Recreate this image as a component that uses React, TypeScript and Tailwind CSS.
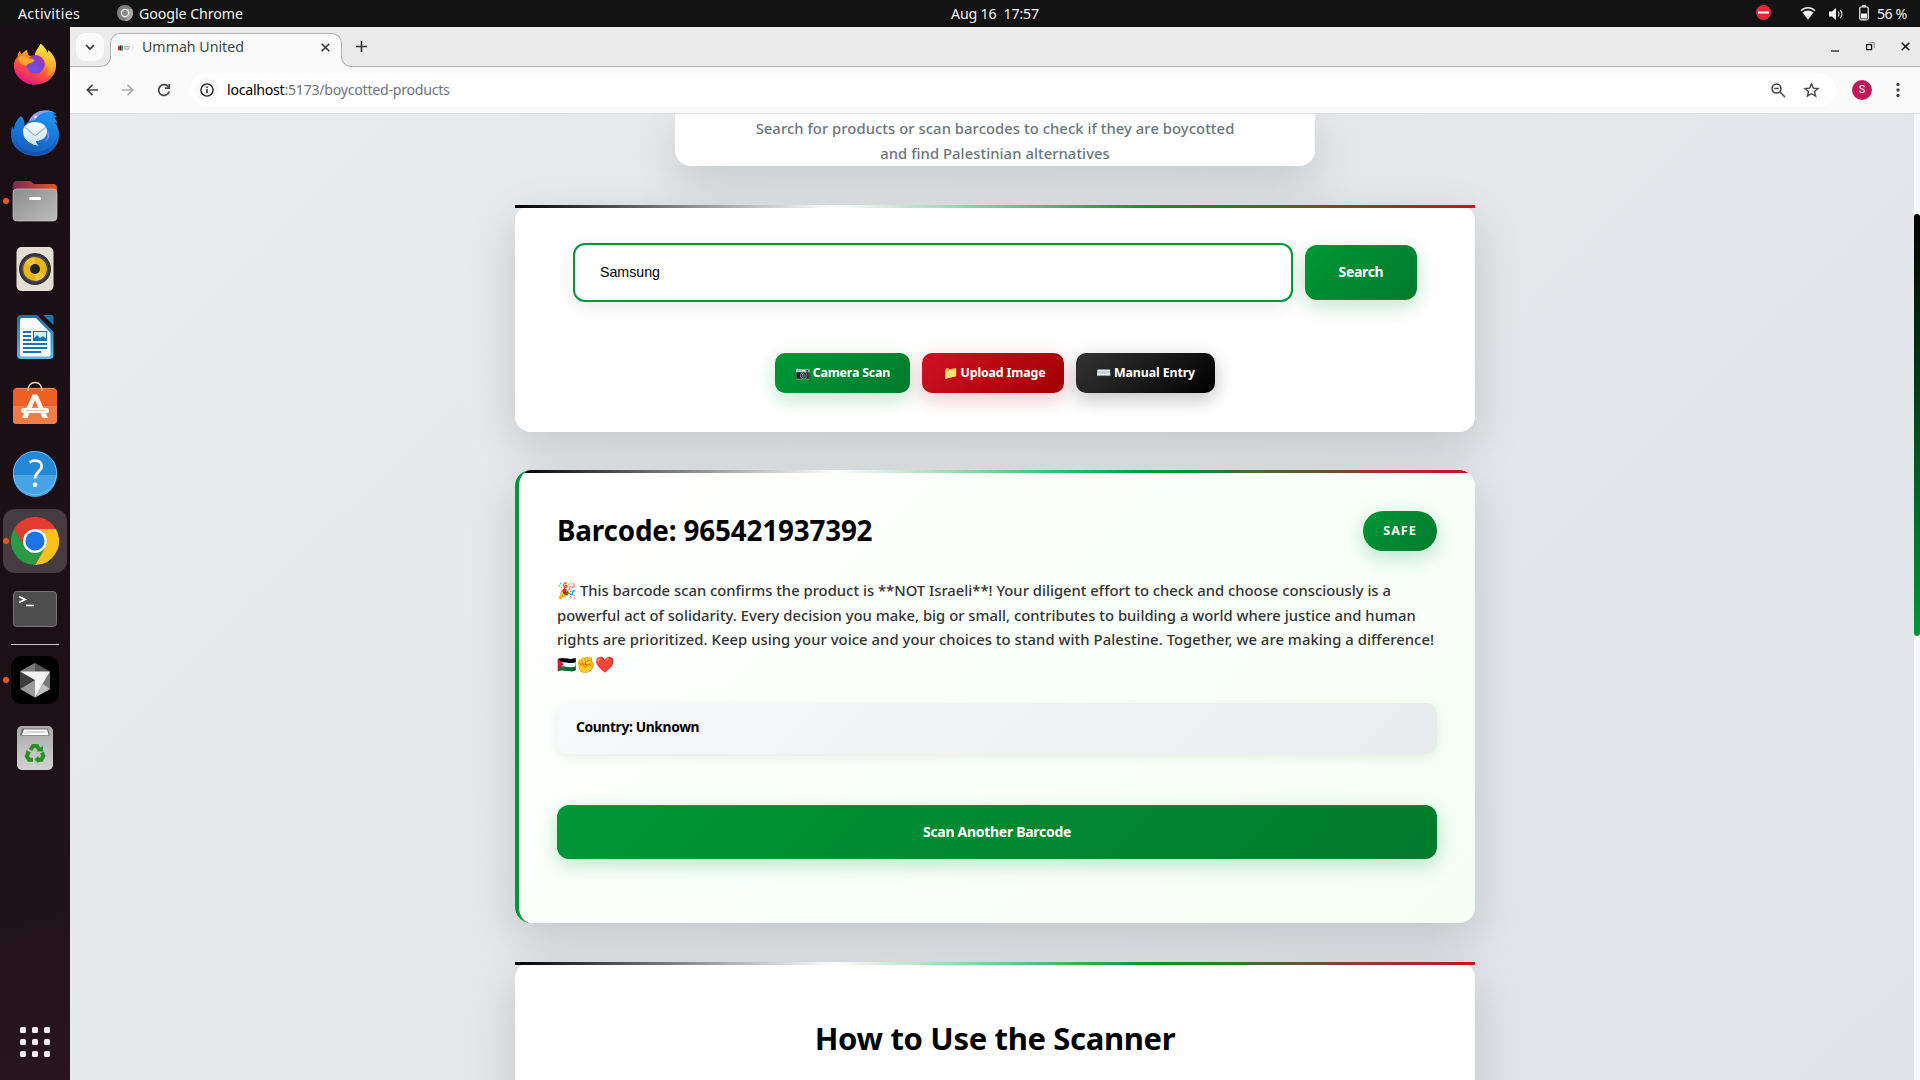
import type { ReactNode } from "react";

function FirefoxIcon() {
  return (
    <svg width="44" height="44" viewBox="0 0 48 48" className="-mt-[2px]">
      <defs>
        <linearGradient id="ff-body" x1="0.8" y1="0.05" x2="0.3" y2="1">
          <stop offset="0" stopColor="#ffe84a" />
          <stop offset="0.35" stopColor="#ffa01f" />
          <stop offset="0.65" stopColor="#ff5040" />
          <stop offset="1" stopColor="#e1108a" />
        </linearGradient>
        <linearGradient id="ff-tail" x1="0.6" y1="0" x2="0.4" y2="1">
          <stop offset="0" stopColor="#fff04a" />
          <stop offset="0.6" stopColor="#ffb02a" />
          <stop offset="1" stopColor="#ff7a2a" />
        </linearGradient>
        <radialGradient id="ff-globe" cx="0.45" cy="0.75" r="0.8">
          <stop offset="0" stopColor="#6a55e0" />
          <stop offset="0.6" stopColor="#8140cc" />
          <stop offset="1" stopColor="#c02ab0" />
        </radialGradient>
      </defs>
      <path d="M5 16c0-3 1-5 3-6.500 0 2 .5 3 1.500 4C11 11 13 10 15.500 8.500c0 3 .5 4.500 2 6.500l12 0L30 2c4 3 6.500 6.500 7.500 10 1-1 1.200-2 1-3 4.500 4 8.500 10 8.500 16 0 12.500-10.500 21.500-23 21.500S1 37 1 25.500c0-4 1.500-7 4-9.500z" fill="url(#ff-body)" />
      <path d="M30 2c4 3 6.500 6.500 7.500 10 1-1 1.200-2 1-3 4.500 4 8 9 8 15.500 0 7-4.500 11-9.500 13.500 2-4 2-9 0-13-2.500-5-9-8.500-13-9C23 11 27 8 30 2z" fill="url(#ff-tail)" />
      <circle cx="24.500" cy="24.500" r="10.200" fill="url(#ff-globe)" />
      <path d="M6 17c3-2 6-2 9 0 3 1.500 6 .5 8.500 2.500 0 2.500-3.500 2.500-6 4-1.500 1-2 2-4 2C9 25 6 22 6 17z" fill="#ffa628" />
    </svg>
  );
}

function ThunderbirdIcon() {
  return (
    <svg width="48" height="48" viewBox="0 0 48 48">
      <defs>
        <linearGradient id="tb-body" x1="0.7" y1="0" x2="0.3" y2="1">
          <stop offset="0" stopColor="#1c95f2" />
          <stop offset="1" stopColor="#1459b8" />
        </linearGradient>
        <linearGradient id="tb-mail" x1="0" y1="0" x2="0" y2="1">
          <stop offset="0" stopColor="#ffffff" />
          <stop offset="1" stopColor="#c3e0fb" />
        </linearGradient>
      </defs>
      <path d="M10 7c3 3 4 6 3.500 10L18 12C21 5 27 1.500 34 1.500c4 0 8 .5 11 3l-3 .5 4 3-3 .5c2 2 3 4 3 6l-2-1c2.500 3.500 4 7 4 12C48 38 38 47 25 47 11 47 0 38 0 26c0-3 .3-6 1-9l2 4C3 15 6 10 10 7z" fill="url(#tb-body)" />
      <path d="M4 31c4 8 12 12 20 12 11 0 20-6 22-16 0 11-9 19-21 19C14 46 6 40 4 31z" fill="#0d4fa5" opacity="0.6" />
      <path d="M18 12C21 5 27 1.500 34 1.500c3 0 6 0 9 1.500-7-1-12 1-16 4l-3 4z" fill="#a99cf5" opacity="0.85" />
      <path d="M33 33c4-3 5-9 1-15 6 5 6 13-1 15z" fill="#9d8df0" opacity="0.7" />
      <circle cx="24.500" cy="7.800" r="1.300" fill="#fff" />
      <path d="M24 13c7 0 12 4 12 9.500 0 6-5 9.500-11 9.500 0 2 1 3 3 4.500-6 0-16-4.500-16-14C12 17 17 13 24 13z" fill="url(#tb-mail)" />
      <path d="M14 18l8.500 7.500c1 1 2.500 1 3.500 0L35 18" fill="none" stroke="#8fbdea" strokeWidth="1.200" />
    </svg>
  );
}

function FilesIcon() {
  return (
    <svg width="48" height="48" viewBox="0 0 48 48">
      <defs>
        <linearGradient id="fl-back" x1="0" y1="0" x2="1" y2="0">
          <stop offset="0" stopColor="#7d2a52" />
          <stop offset="1" stopColor="#e9541f" />
        </linearGradient>
        <linearGradient id="fl-front" x1="0" y1="0" x2="1" y2="1">
          <stop offset="0" stopColor="#8d8d8d" />
          <stop offset="1" stopColor="#bcbcbc" />
        </linearGradient>
      </defs>
      <path d="M2 20V8a4 4 0 0 1 4-4h13c2 0 2.500 3 4.500 3H42a4 4 0 0 1 4 4v9z" fill="url(#fl-back)" />
      <rect x="2" y="12" width="44" height="32" rx="4" fill="url(#fl-front)" stroke="#c8c8c8" strokeWidth="0.700" />
      <rect x="18" y="20" width="12" height="3" rx="1.500" fill="#fff" />
    </svg>
  );
}

function SpeakerIcon() {
  return (
    <svg width="48" height="48" viewBox="0 0 48 48">
      <rect x="5.500" y="2" width="37" height="44" rx="5" fill="#e3dfd3" />
      <circle cx="24" cy="24" r="16" fill="#33333a" />
      <circle cx="24" cy="24" r="13.500" fill="#4b4b55" />
      <circle cx="24" cy="24" r="11.800" fill="#e8b418" />
      <path d="M24 24L14 17.500A12 12 0 0 1 24 12.200zM24 24l10 6.500A12 12 0 0 1 24 35.800z" fill="#f7cd45" opacity="0.700" />
      <circle cx="24" cy="24" r="5" fill="#232327" />
    </svg>
  );
}

function WriterIcon() {
  return (
    <svg width="48" height="48" viewBox="0 0 48 48">
      <defs>
        <linearGradient id="wr" x1="0" y1="0" x2="0" y2="1">
          <stop offset="0" stopColor="#0d74ad" />
          <stop offset="1" stopColor="#5bbce6" />
        </linearGradient>
      </defs>
      <path d="M10 2h16l16.500 17v23a4 4 0 0 1-4 4H10a4 4 0 0 1-4-4V6a4 4 0 0 1 4-4z" fill="url(#wr)" />
      <path d="M11 5h14l14.500 15v21.500a2 2 0 0 1-2 2H11a2 2 0 0 1-2-2V7a2 2 0 0 1 2-2z" fill="#fafafa" />
      <path d="M32 2h8.500a2 2 0 0 1 2 2v8z" fill="#1579b0" />
      <g fill="#1276ae">
        <rect x="12" y="18" width="8" height="2" />
        <rect x="12" y="22" width="8" height="2" />
        <rect x="12" y="26" width="8" height="2" />
        <rect x="12" y="30" width="24" height="2" />
        <rect x="12" y="34" width="24" height="2" />
        <rect x="12" y="38" width="18" height="2" />
      </g>
      <rect x="22.500" y="18.500" width="13" height="9" fill="#d9effa" stroke="#1276ae" />
      <path d="M23 27v-2l3-3 3 3 3-2 3 2.500V27z" fill="#1276ae" />
    </svg>
  );
}

function SoftwareIcon() {
  return (
    <svg width="48" height="48" viewBox="0 0 48 48" className="-mt-[2px]">
      <rect x="2" y="8" width="44" height="36" rx="4" fill="#ee5f24" />
      <path d="M2 26h44v14a4 4 0 0 1-4 4H6a4 4 0 0 1-4-4z" fill="#f07c49" />
      <path d="M5 8.400h38" stroke="#f59a70" strokeWidth="0.800" />
      <path d="M17 11c0-5.500 3-8.500 7-8.500s7 3 7 8.500" fill="none" stroke="#f7dcae" strokeWidth="1.600" />
      <path d="M21.500 14.500h5L37 38h-5.500L24 20.500 16.500 38H11z" fill="#fff5ee" />
      <rect x="10" y="28" width="28" height="5" rx="2.500" fill="#fff" />
      <path d="M14 30.500h20" stroke="#f4b396" strokeWidth="0.800" />
    </svg>
  );
}

function HelpIcon() {
  return (
    <svg width="48" height="48" viewBox="0 0 48 48">
      <circle cx="24" cy="24" r="22" fill="#2389d7" />
      <path d="M2 26h44a22 22 0 0 1-44 0z" fill="#46a4e4" />
      <circle cx="24" cy="24" r="21.600" fill="none" stroke="#7cc4f2" strokeWidth="0.800" />
      <path d="M18.500 13.300c1.800-1.200 3.500-1.700 5.500-1.700 4 0 6.800 2.200 6.800 5.700 0 5-6.800 5.700-6.800 12.200" fill="none" stroke="#fff" strokeWidth="2.800" />
      <circle cx="24" cy="35.700" r="2.300" fill="#fff" />
    </svg>
  );
}

function ChromeIcon() {
  return (
    <svg width="48" height="48" viewBox="0 0 48 48">
      <path d="M3.200 12A24 24 0 0 1 44.800 12H24a12 12 0 0 0-10.400 18z" fill="#e33b2e" />
      <path d="M44.800 12A24 24 0 0 1 24 48L34.400 30A12 12 0 0 0 24 12z" fill="#fbc116" />
      <path d="M24 48A24 24 0 0 1 3.200 12l10.400 18a12 12 0 0 0 20.800 0z" fill="#2a9a47" />
      <circle cx="24" cy="24" r="12" fill="#fff" />
      <circle cx="24" cy="24" r="9.600" fill="#1b73e8" />
    </svg>
  );
}

function TerminalIcon() {
  return (
    <svg width="48" height="48" viewBox="0 0 48 48">
      <rect x="2.500" y="6.500" width="43" height="35" rx="3.500" fill="#4d4d4d" stroke="#747474" />
      <path d="M8 11.500l6 3-6 3" fill="none" stroke="#fff" strokeWidth="1.800" />
      <path d="M15 20.500h8" stroke="#fff" strokeWidth="1.600" />
    </svg>
  );
}

function CursorIcon() {
  return (
    <svg width="48" height="48" viewBox="0 0 48 48">
      <rect width="48" height="48" rx="11" fill="#000" />
      <path d="M24 7l15 8.500L24 24 9 15.500z" fill="#585858" />
      <path d="M24 7v10L9 15.500z" fill="#7a7a7a" />
      <path d="M9 15.500V33l15-9z" fill="#3f3f3f" />
      <path d="M9 33l15 8.500V24z" fill="#9a9a9a" />
      <path d="M39 15.500V33l-15 8.500z" fill="#777" />
      <path d="M24 41.500L39 33l-7-5z" fill="#c0c0c0" />
      <path d="M9 15.500h30l-15 26V24z" fill="#f4f4f4" />
    </svg>
  );
}

function TrashIcon() {
  return (
    <svg width="48" height="48" viewBox="0 0 48 48">
      <defs>
        <linearGradient id="tr" x1="0" y1="0" x2="0" y2="1">
          <stop offset="0" stopColor="#a9a9a9" />
          <stop offset="1" stopColor="#d2d2d2" />
        </linearGradient>
      </defs>
      <rect x="6" y="2" width="36" height="44" rx="5" fill="url(#tr)" />
      <path d="M11 4.500h26l2 7H9z" fill="#6c6c6c" />
      <path d="M13 5.500h23l1.500 5.500H11z" fill="#fff" />
      <path d="M14 7.500l21 1M13 9.500l20-2" stroke="#bbb" strokeWidth="0.700" />
      <g fill="none" stroke="#2a8f22" strokeWidth="4">
        <path d="M19.500 26l2.500-4h4l2.500 3.800" />
        <path d="M31 28.500l1.300 3.500-2 3.800h-4" />
        <path d="M22 35.800h-4l-2.200-3.600 1.600-3.400" />
      </g>
      <g fill="#2a8f22">
        <path d="M25.500 27.500l6.500 0 0-6z" />
        <path d="M27.500 31.500v8l-4-4z" />
        <path d="M14.500 30.500l1-4.500 5 3z" />
      </g>
    </svg>
  );
}

function DockItem({ children, running, active }: { children: ReactNode; running?: boolean; active?: boolean }) {
  return (
    <div className="relative flex h-16 w-full shrink-0 items-center justify-center">
      <div className={active ? "flex size-16 items-center justify-center rounded-[12px] bg-[#463b41]" : "flex size-16 items-center justify-center"}>
        {children}
      </div>
      {running && <span className="absolute left-[3px] size-[6px] rounded-full bg-[#e95420]" />}
    </div>
  );
}

function Dock() {
  return (
    <aside className="flex w-[70px] shrink-0 flex-col items-center gap-1 bg-[linear-gradient(165deg,#190e14_0%,#1c1017_55%,#1f1219_80%,#27141f_100%)] pt-[6px]">
      <DockItem><FirefoxIcon /></DockItem>
      <DockItem><ThunderbirdIcon /></DockItem>
      <DockItem running><FilesIcon /></DockItem>
      <DockItem><SpeakerIcon /></DockItem>
      <DockItem><WriterIcon /></DockItem>
      <DockItem><SoftwareIcon /></DockItem>
      <DockItem><HelpIcon /></DockItem>
      <DockItem running active><ChromeIcon /></DockItem>
      <DockItem><TerminalIcon /></DockItem>
      <div className="-my-[1px] h-px w-12 shrink-0 bg-[#c9c5c7]" />
      <DockItem running><CursorIcon /></DockItem>
      <DockItem><TrashIcon /></DockItem>
      <div className="mt-auto mb-[23px] grid grid-cols-3 gap-[6px]">
        {Array.from({ length: 9 }, (_, i) => (
          <span key={i} className="size-[6px] rounded-[1.500px] bg-[#f0efee]" />
        ))}
      </div>
    </aside>
  );
}

function TopBar() {
  return (
    <header className="grid h-[27px] shrink-0 grid-cols-[1fr_auto_1fr] items-center bg-[#131313] text-[14.2px] leading-[27px] text-[#f2f2f2]">
      <div className="flex items-center pl-[18px]">
        <span className="w-[99px] tracking-[0.3px]">Activities</span>
        <svg width="16" height="16" viewBox="0 0 16 16" className="mr-[6px] -mt-px">
          <circle cx="8" cy="8" r="8" fill="#808080" />
          <path d="M8 4h7A8 8 0 0 1 8 16l3.500-6z" fill="#a5a5a5" />
          <circle cx="8" cy="8" r="4.200" fill="#f5f5f5" />
          <circle cx="8" cy="8" r="3" fill="#8a8a8a" />
        </svg>
        <span className="tracking-[-0.06px]">Google Chrome</span>
      </div>
      <div className="pl-[70px] tracking-[-0.17px] whitespace-pre">Aug 16  17:57</div>
      <div className="flex items-center justify-end pr-[13px]">
        <svg width="15" height="15" viewBox="0 0 15 15" className="mr-[29px] -mt-[2px]">
          <circle cx="7.500" cy="7.500" r="7.500" fill="#e6273c" />
          <rect x="2" y="6.500" width="11" height="2" fill="#fff" />
        </svg>
        <svg width="16" height="14" viewBox="0 0 16 14" className="mr-[12px]">
          <path d="M1 3.800C5-.2 11-.2 15 3.800" fill="none" stroke="#eee" strokeWidth="1.400" />
          <path d="M2.500 5.500C6 2.800 10 2.800 13.500 5.500L8 12.800z" fill="#f2f2f2" />
        </svg>
        <svg width="16" height="14" viewBox="0 0 16 14" className="mr-[15px]">
          <path d="M1 4.500h3L8 1v12L4 9.500H1z" fill="#f2f2f2" />
          <path d="M10 4.500c1.200 1.500 1.200 3.500 0 5M12.200 3c2.200 2.500 2.200 5.500 0 8" fill="none" stroke="#d0d0d0" strokeWidth="1.200" />
        </svg>
        <svg width="10" height="16" viewBox="0 0 10 16" className="mr-[8px] -mt-[2px]">
          <path d="M3 1h4" stroke="#f2f2f2" strokeWidth="1.600" />
          <rect x="0.700" y="2" width="8.600" height="12.800" rx="1.500" fill="none" stroke="#f2f2f2" strokeWidth="1.200" />
          <rect x="2" y="8.500" width="6" height="5" fill="#f2f2f2" />
        </svg>
        <span className="tracking-[-0.4px]">56 %</span>
      </div>
    </header>
  );
}

function TabStrip() {
  return (
    <div className="relative flex h-10 shrink-0 items-stretch border-b border-[#b1b1b1] bg-[#ebebeb]">
      <button className="mt-[6px] ml-[6px] flex size-7 items-center justify-center rounded-[9px] bg-[#fafafa]">
        <svg width="10" height="7" viewBox="0 0 10 7" fill="none" stroke="#303030" strokeWidth="1.700">
          <path d="M1 1l4 4 4-4" />
        </svg>
      </button>
      <div className="relative mt-[6px] -mb-px ml-[6px] flex w-[232px] items-center rounded-t-[10px] border border-b-0 border-[#b1b1b1] bg-[#fafafa] pl-[7px] text-[14.2px] text-[#454746]">
        <span className="absolute bottom-0 -left-[10px] size-[10px] bg-[#fafafa]">
          <span className="block size-full rounded-br-[10px] border-r border-b border-[#b1b1b1] bg-[#ebebeb]" />
        </span>
        <span className="absolute -right-[10px] bottom-0 size-[10px] bg-[#fafafa]">
          <span className="block size-full rounded-bl-[10px] border-b border-l border-[#b1b1b1] bg-[#ebebeb]" />
        </span>
        <svg width="16" height="6" viewBox="0 0 16 6" className="-mt-[6px]">
          <rect width="2" height="5" y="0.500" fill="#e0283c" rx="1" />
          <rect x="2" width="1.500" height="5" y="0.500" fill="#222" />
          <rect x="3.500" width="1.500" height="5" y="0.500" fill="#2f9e58" />
          <path d="M6 1.500h6M6 3h6M6 4.300h5" stroke="#9a9a9a" strokeWidth="0.700" />
          <path d="M14 1l1.500 2L14 5" fill="none" stroke="#c9d8cc" strokeWidth="0.700" />
        </svg>
        <span className="-mt-[7px] ml-[8px]">Ummah United</span>
        <svg width="9" height="9" viewBox="0 0 9 9" className="-mt-[6px] mr-[11px] ml-auto" stroke="#303030" strokeWidth="1.500">
          <path d="M0.700 0.700l7.600 7.600M8.300 0.700L0.700 8.300" />
        </svg>
      </div>
      <svg width="11" height="11" viewBox="0 0 11 11" className="mt-[14px] ml-[14px]" stroke="#303030" strokeWidth="1.600">
        <path d="M5.500 0v11M0 5.500h11" />
      </svg>
      <div className="mr-[10px] ml-auto flex items-center pb-[1px]">
        <svg width="8" height="9" viewBox="0 0 8 9" className="mt-[2px] mr-[27px]">
          <path d="M0 8h8" stroke="#111" strokeWidth="1.200" />
        </svg>
        <svg width="9" height="9" viewBox="0 0 9 9" className="mr-[26px]" fill="none">
          <path d="M2.500 0.600h5.700v5.700" stroke="#888" strokeWidth="1" />
          <rect x="0.600" y="2.600" width="5" height="5" stroke="#111" strokeWidth="1.200" />
        </svg>
        <svg width="9" height="9" viewBox="0 0 9 9" stroke="#111" strokeWidth="1.500">
          <path d="M0.700 0.700l7.600 7.600M8.300 0.700L0.700 8.300" />
        </svg>
      </div>
    </div>
  );
}

function Toolbar() {
  return (
    <div className="flex h-[47px] shrink-0 items-center border-b border-[#dcdcdc] bg-[#fafafa]">
      <svg width="13" height="12" viewBox="0 0 13 12" className="ml-[16px]" fill="none" stroke="#454746" strokeWidth="1.700">
        <path d="M12 6H1.500M6.500 0.800L1.300 6l5.200 5.200" />
      </svg>
      <svg width="13" height="12" viewBox="0 0 13 12" className="ml-[22px]" fill="none" stroke="#ababab" strokeWidth="1.700">
        <path d="M1 6h10.500M6.500 0.800L11.700 6l-5.200 5.200" />
      </svg>
      <svg width="14" height="14" viewBox="0 0 14 14" className="ml-[23px]" fill="none" stroke="#454746" strokeWidth="1.700">
        <path d="M12.200 8.500A5.400 5.400 0 1 1 11.500 4" />
        <path d="M12.300 0.800v4.300H8" />
      </svg>
      <div className="ml-[19px] flex h-[34px] w-[1646px] items-center rounded-full bg-white pl-[5px]">
        <span className="flex size-6 items-center justify-center rounded-full bg-[#f8f8f8]">
          <svg width="14" height="14" viewBox="0 0 14 14" fill="none" stroke="#222" strokeWidth="1.400">
            <circle cx="7" cy="7" r="6.100" />
            <path d="M7 6v4.200M7 3.600v1.400" strokeWidth="1.500" />
          </svg>
        </span>
        <span className="-mt-px ml-[8px] text-[14.2px] tracking-[-0.28px] whitespace-nowrap text-[#70757a]">
          <span className="text-black">localhost</span>:5173/boycotted-products
        </span>
        <svg width="15" height="15" viewBox="0 0 15 15" className="mr-[17px] ml-auto" fill="none" stroke="#454746" strokeWidth="1.500">
          <circle cx="5.500" cy="5.500" r="4.500" />
          <path d="M9 9l5 5M3.300 5.500h4.400" />
        </svg>
        <svg width="17" height="16" viewBox="0 0 17 16" className="mr-[16px]" fill="none" stroke="#454746" strokeWidth="1.400">
          <path d="M8.500 1.900l1.900 4.200 4.600.4-3.500 3.100 1.100 4.500-4.100-2.400-4.100 2.400 1.100-4.500L2 6.500l4.600-.4z" />
        </svg>
      </div>
      <span className="ml-[16px] flex size-5 items-center justify-center rounded-full bg-[#c2185b] font-['Roboto'] text-[11px] text-white">S</span>
      <svg width="4" height="16" viewBox="0 0 4 16" className="ml-[24px]" fill="#454746">
        <circle cx="2" cy="2.500" r="1.700" />
        <circle cx="2" cy="8" r="1.700" />
        <circle cx="2" cy="13.500" r="1.700" />
      </svg>
    </div>
  );
}

function FlagStripe() {
  return <div className="h-[3px] bg-[linear-gradient(90deg,#000_0%,#fff_33%,#009736_66%,#ce1126_100%)]" />;
}

function Page() {
  return (
    <main className="flex min-h-0 flex-1 flex-col items-center overflow-hidden bg-[linear-gradient(135deg,#e8ebee_0%,#e4e8eb_50%,#e0e3e7_100%)]">
      <section className="ml-[6px] flex h-[52px] w-[640px] shrink-0 justify-center rounded-b-[16px] bg-white/98 pt-[1.500px] shadow-[0_16px_48px_rgba(0,0,0,0.150)]">
        <p className="text-center text-[14.8px] leading-[25px] font-medium tracking-[0.056px] text-[#6c757d]">
          Search for products or scan barcodes to check if they are boycotted
          <br />
          and find Palestinian alternatives
        </p>
      </section>

      <section className="mt-[39px] ml-[6px] h-[227px] w-[960px] shrink-0 rounded-[16px] bg-white/98 shadow-[0_16px_48px_rgba(0,0,0,0.150)]">
        <FlagStripe />
        <div className="mt-[35px] flex items-center gap-3 pl-[58px]">
          <div className="flex h-[59px] w-[720px] items-center rounded-[12px] border-2 border-[#009736] bg-white pl-[25px] font-['Liberation_Sans'] text-[14.2px] text-black shadow-[0_6px_20px_rgba(0,0,0,0.080)]">
            Samsung
          </div>
          <button className="h-[55px] w-28 rounded-[12px] bg-[linear-gradient(135deg,#009736,#007a2c)] pb-[2px] text-[14px] font-bold tracking-[-0.33px] text-white shadow-[0_6px_20px_rgba(0,151,54,0.250)]">
            Search
          </button>
        </div>
        <div className="mt-[51px] flex justify-center gap-3 text-[12.4px] font-bold text-white">
          <button className="h-10 w-[135px] rounded-[10px] bg-[linear-gradient(135deg,#009736,#007a2c)] tracking-[-0.19px] shadow-[0_6px_20px_rgba(0,151,54,0.250)]">
            📷 Camera Scan
          </button>
          <button className="h-10 w-[142px] rounded-[10px] bg-[linear-gradient(135deg,#ce1126,#a00000)] pl-[2px] tracking-[-0.15px] shadow-[0_6px_20px_rgba(206,17,38,0.250)]">
            📁 Upload Image
          </button>
          <button className="h-10 w-[139px] rounded-[10px] bg-[linear-gradient(135deg,#333,#000)] tracking-[-0.12px] shadow-[0_6px_20px_rgba(0,0,0,0.250)]">
            ⌨️ Manual Entry
          </button>
        </div>
      </section>

      <section className="mt-[38px] ml-[6px] h-[453px] w-[960px] shrink-0 overflow-hidden rounded-[16px] border-l-4 border-[#009736] bg-[linear-gradient(135deg,#ffffff_0%,#f4fff4_100%)] shadow-[0_16px_48px_rgba(0,0,0,0.150)]">
        <FlagStripe />
        <div className="px-[38px] pt-[35px]">
          <div className="flex h-[46px] items-center justify-between">
            <h3 className="text-[27.8px] font-bold tracking-[-0.16px] text-black">Barcode: 965421937392</h3>
            <span className="flex h-10 w-[74px] items-center justify-center rounded-[20px] bg-[linear-gradient(135deg,#009736,#007a2c)] text-[12.600px] font-bold tracking-[1px] text-white shadow-[0_6px_20px_rgba(0,151,54,0.250)]">
              SAFE
            </span>
          </div>
          <p className="mt-6 h-[98px] text-[14.8px] leading-[24.500px] font-medium tracking-[0.014px] whitespace-nowrap text-[#333]">
            <span className="text-[15.600px] leading-none">🎉</span> <span className="tracking-[0.001px]">This barcode scan confirms the product is **NOT Israeli**! Your diligent effort to check and choose consciously is a</span>
            <br />
            powerful act of solidarity. Every decision you make, big or small, contributes to building a world where justice and human
            <br />
            <span className="tracking-[0.056px]">rights are prioritized. Keep using your voice and your choices to stand with Palestine. Together, we are making a difference!</span>
            <br />
            <span className="text-[15.600px] leading-none">🇵🇸✊❤️</span>
          </p>
          <div className="mt-[27px] flex h-[51px] items-center rounded-[10px] bg-[linear-gradient(135deg,#f8f9fa,#e9ecef)] pb-[2px] pl-[19px] text-[13.800px] font-bold tracking-[-0.36px] text-black shadow-[0_3px_12px_rgba(0,0,0,0.080)]">
            Country: Unknown
          </div>
          <button className="mt-[51px] h-[54px] w-full rounded-[12px] bg-[linear-gradient(135deg,#009736,#007a2c)] pb-[2px] text-[14px] font-bold tracking-[-0.29px] text-white shadow-[0_6px_20px_rgba(0,151,54,0.250)]">
            Scan Another Barcode
          </button>
        </div>
      </section>

      <section className="mt-[39px] ml-[6px] h-[300px] w-[960px] shrink-0 rounded-[16px] bg-white/98 shadow-[0_16px_48px_rgba(0,0,0,0.150)]">
        <FlagStripe />
        <h2 className="mt-[48px] text-center text-[31px] leading-[51px] font-bold tracking-[-0.34px] text-black">How to Use the Scanner</h2>
      </section>
    </main>
  );
}

export default function App() {
  return (
    <div className="flex h-[1080px] w-[1920px] flex-col overflow-hidden font-['Noto_Sans',sans-serif]">
      <TopBar />
      <div className="flex min-h-0 flex-1">
        <Dock />
        <div className="flex min-w-0 flex-1 flex-col">
          <TabStrip />
          <Toolbar />
          <div className="flex min-h-0 flex-1">
            <Page />
            <div className="w-[6px] shrink-0 bg-[#f8f9fa] pt-[100px]">
              <div className="h-[422px] rounded-[3px] bg-[linear-gradient(180deg,#000,#009736)]" />
            </div>
          </div>
        </div>
      </div>
    </div>
  );
}
